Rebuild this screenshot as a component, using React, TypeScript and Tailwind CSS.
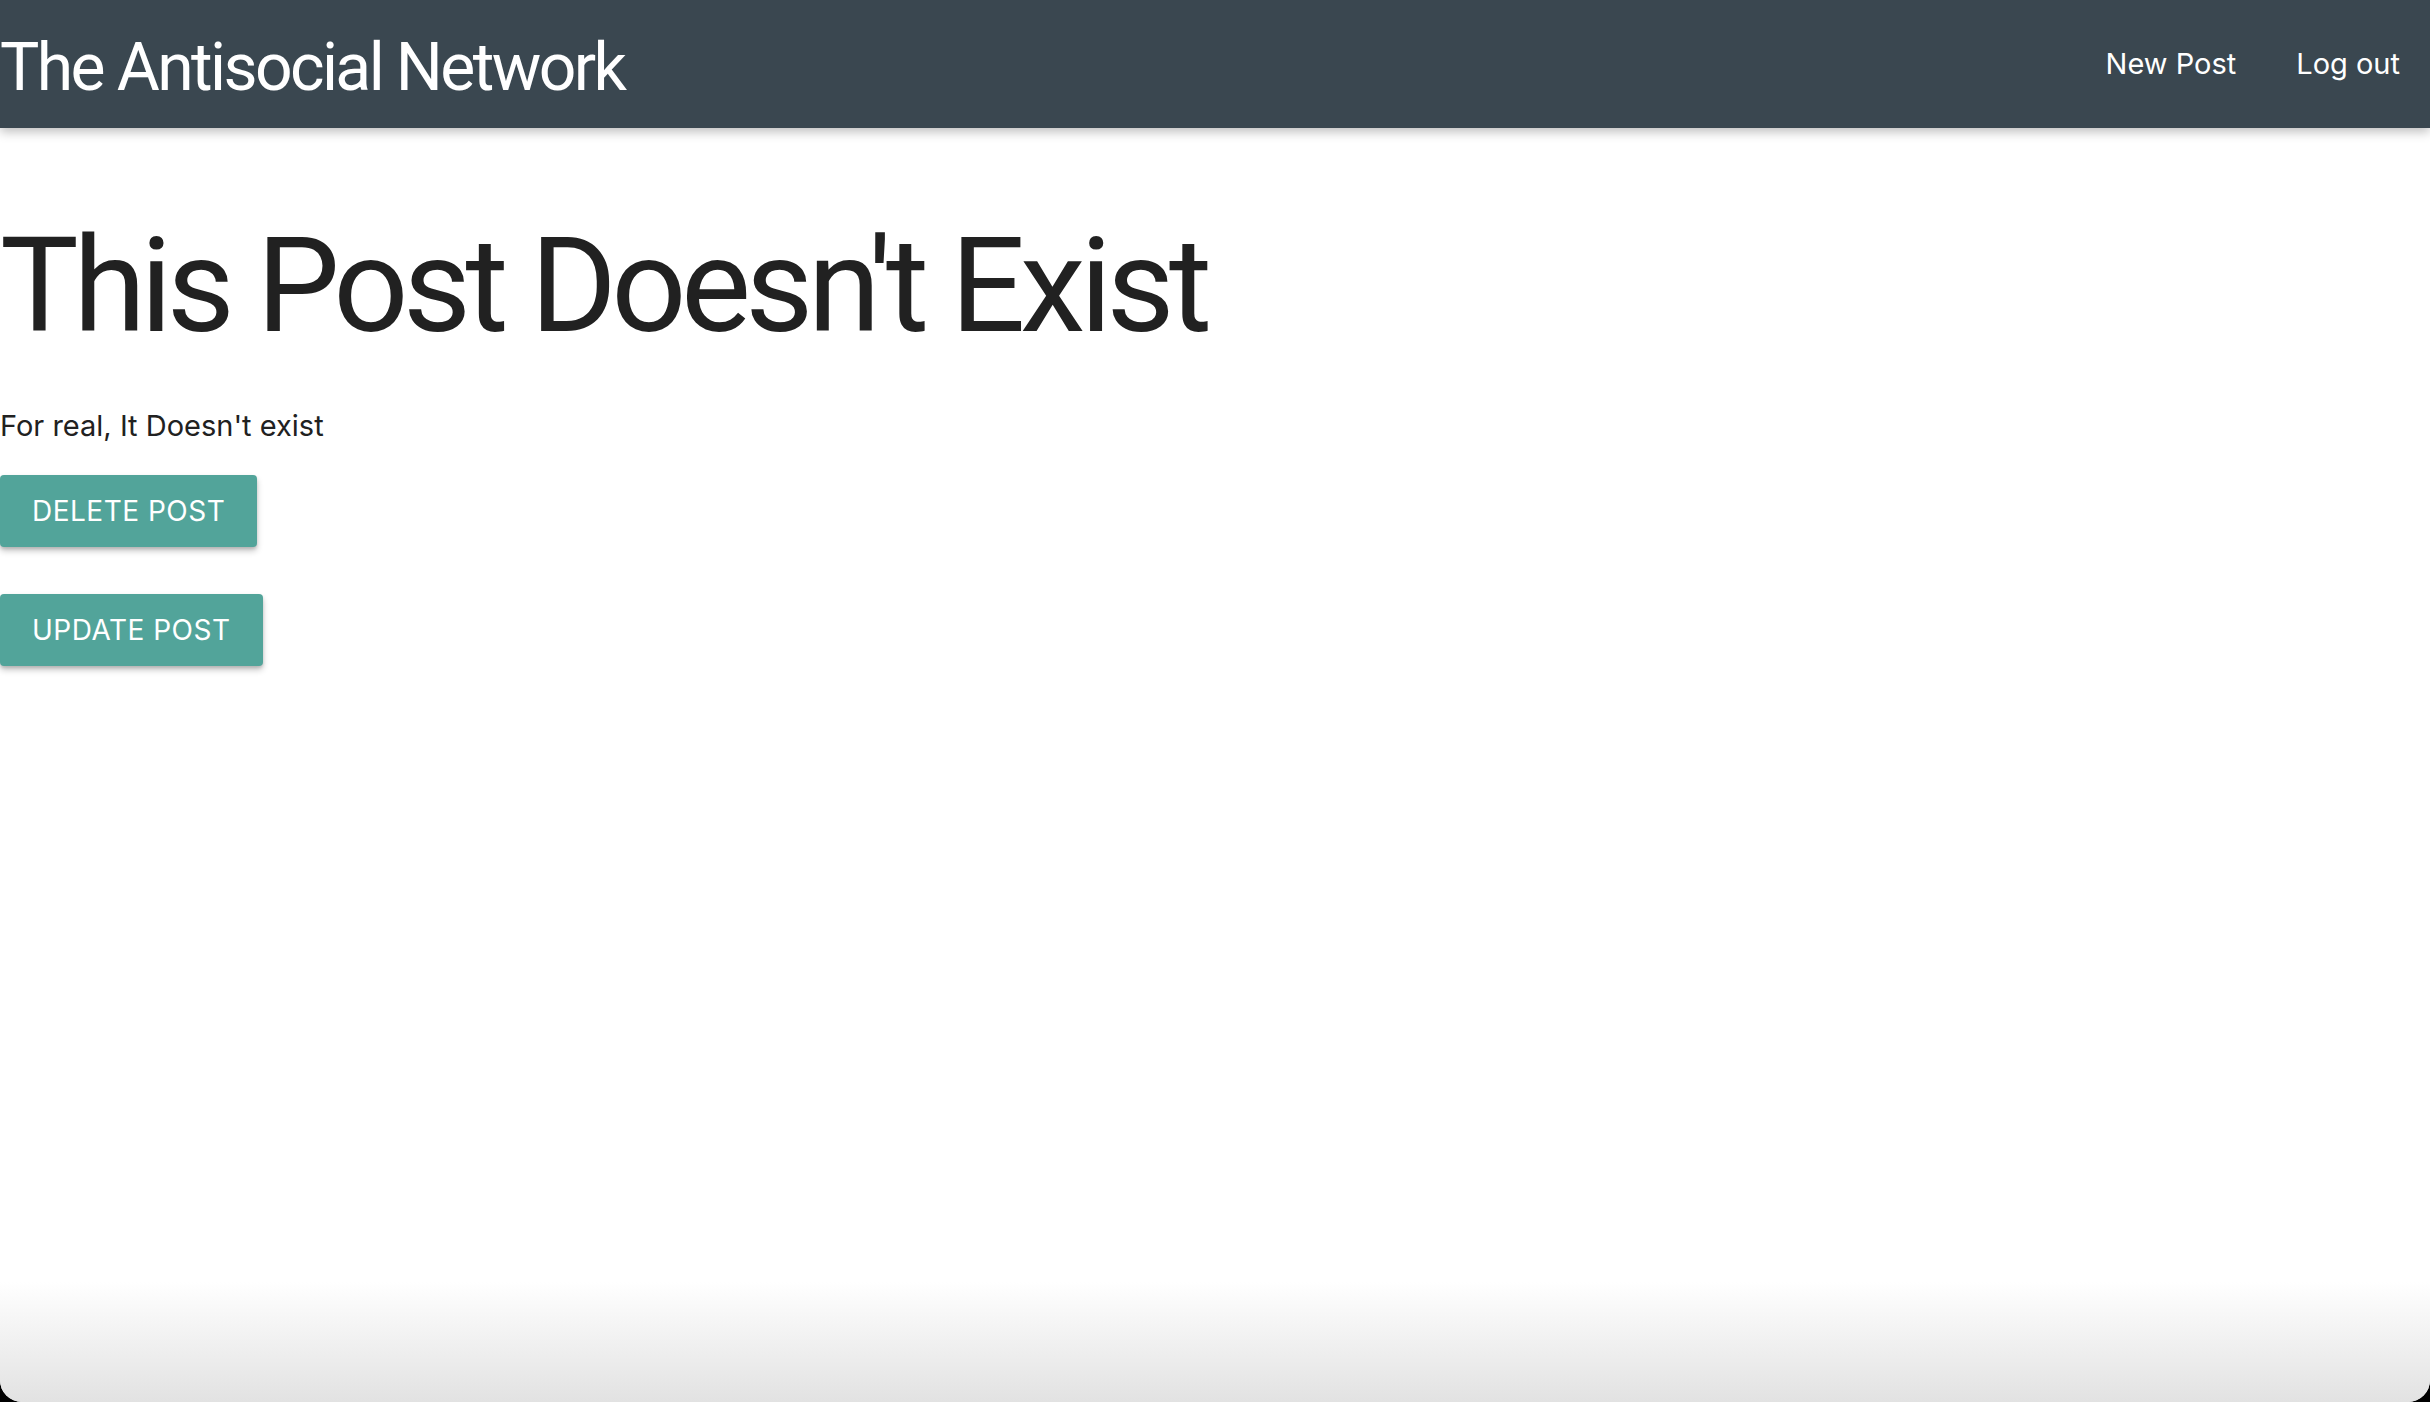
import React from 'react';

const NavBar: React.FC = () => (
  <nav className="h-[128px] bg-[#3a4750] flex items-center justify-between shadow-[0_4px_10px_rgba(0,0,0,0.25)] relative z-10">
    <a href="#" className="pt-[7px] text-white font-['Roboto',sans-serif] text-[66px] leading-none tracking-[-2.6px]">
      The Antisocial Network
    </a>
    <ul className="flex items-center h-full">
      <li>
        <a href="#" className="block px-[30px] text-white text-[29px]">New Post</a>
      </li>
      <li>
        <a href="#" className="block px-[30px] text-white text-[29px]">Log out</a>
      </li>
    </ul>
  </nav>
);

const PostButton: React.FC<{ label: string }> = ({ label }) => (
  <button className="h-[72px] px-[32px] bg-[#52a49a] text-white text-[28px] uppercase tracking-[0.5px] rounded-[4px] shadow-[0_4px_6px_rgba(0,0,0,0.22),0_2px_3px_rgba(0,0,0,0.12)]">
    {label}
  </button>
);

export default function App() {
  return (
    <div className="min-h-[1402px] bg-black flex flex-col font-['Inter',sans-serif] text-[#212121]">
      <div className="flex-1 flex flex-col bg-white rounded-b-[22px] overflow-hidden">
        <NavBar />
        <main className="flex-1">
          <h1 className="mt-[86px] font-['Roboto',sans-serif] text-[132px] leading-[1.1] tracking-[-5.6px]">This Post Doesn't Exist</h1>
          <p className="mt-[45px] text-[29px]">For real, It Doesn't exist</p>
          <div className="mt-[27px] flex flex-col items-start gap-[47px]">
            <PostButton label="Delete Post" />
            <PostButton label="Update Post" />
          </div>
        </main>
        <div className="h-[120px] bg-gradient-to-b from-white to-[#e2e2e2]" />
      </div>
    </div>
  );
}
